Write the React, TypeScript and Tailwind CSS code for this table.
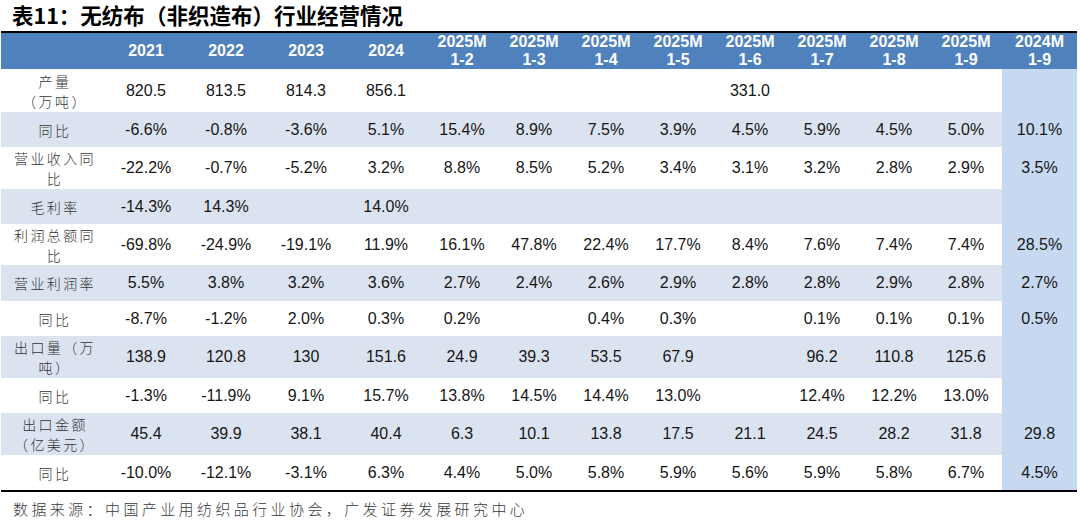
const cols = ['2021', '2022', '2023', '2024', '2025M 1-2', '2025M 1-3', '2025M 1-4', '2025M 1-5', '2025M 1-6', '2025M 1-7', '2025M 1-8', '2025M 1-9', '2024M 1-9'];

const rows = [
  { label: ['产量', '（万吨）'], h: 'h-[43px]', band: false, cells: ['820.5', '813.5', '814.3', '856.1', '', '', '', '', '331.0', '', '', '', ''] },
  { label: ['同比'], h: 'h-[35px]', band: true, cells: ['-6.6%', '-0.8%', '-3.6%', '5.1%', '15.4%', '8.9%', '7.5%', '3.9%', '4.5%', '5.9%', '4.5%', '5.0%', '10.1%'] },
  { label: ['营业收入同', '比'], h: 'h-[42px]', band: false, cells: ['-22.2%', '-0.7%', '-5.2%', '3.2%', '8.8%', '8.5%', '5.2%', '3.4%', '3.1%', '3.2%', '2.8%', '2.9%', '3.5%'] },
  { label: ['毛利率'], h: 'h-[35px]', band: true, cells: ['-14.3%', '14.3%', '', '14.0%', '', '', '', '', '', '', '', '', ''] },
  { label: ['利润总额同', '比'], h: 'h-[41px]', band: false, cells: ['-69.8%', '-24.9%', '-19.1%', '11.9%', '16.1%', '47.8%', '22.4%', '17.7%', '8.4%', '7.6%', '7.4%', '7.4%', '28.5%'] },
  { label: ['营业利润率'], h: 'h-[36px]', band: true, cells: ['5.5%', '3.8%', '3.2%', '3.6%', '2.7%', '2.4%', '2.6%', '2.9%', '2.8%', '2.8%', '2.9%', '2.8%', '2.7%'] },
  { label: ['同比'], h: 'h-[35px]', band: false, cells: ['-8.7%', '-1.2%', '2.0%', '0.3%', '0.2%', '', '0.4%', '0.3%', '', '0.1%', '0.1%', '0.1%', '0.5%'] },
  { label: ['出口量（万', '吨）'], h: 'h-[42px]', band: true, cells: ['138.9', '120.8', '130', '151.6', '24.9', '39.3', '53.5', '67.9', '', '96.2', '110.8', '125.6', ''] },
  { label: ['同比'], h: 'h-[35px]', band: false, cells: ['-1.3%', '-11.9%', '9.1%', '15.7%', '13.8%', '14.5%', '14.4%', '13.0%', '', '12.4%', '12.2%', '13.0%', ''] },
  { label: ['出口金额', '（亿美元）'], h: 'h-[42px]', band: true, cells: ['45.4', '39.9', '38.1', '40.4', '6.3', '10.1', '13.8', '17.5', '21.1', '24.5', '28.2', '31.8', '29.8'] },
  { label: ['同比'], h: 'h-[35px]', band: false, cells: ['-10.0%', '-12.1%', '-3.1%', '6.3%', '4.4%', '5.0%', '5.8%', '5.9%', '5.6%', '5.9%', '5.8%', '6.7%', '4.5%'] },
];

const grid = 'grid grid-cols-[105px_repeat(4,80px)_repeat(8,72px)_75px]';

// centred full-width brackets, as in the source table
function Cjk({ text }: { text: string }) {
  return (
    <>
      {text.split(/([（）])/).map((part, k) =>
        part === '（' || part === '）' ? (
          <span key={k} className="font-['Noto_Sans_CJK_TC','Noto_Sans_CJK_SC',sans-serif]">
            {part}
          </span>
        ) : (
          part
        )
      )}
    </>
  );
}

export default function App() {
  return (
    <div className="w-[1080px] h-[526px] bg-white overflow-hidden font-['Liberation_Sans',Arial,sans-serif]">
      <div className="h-[31px] pl-[12px] pt-[1px] text-[21.5px] leading-[28px] font-bold text-black whitespace-nowrap font-['Noto_Sans_CJK_SC','Noto_Sans',sans-serif]">
        <Cjk text="表11：无纺布（非织造布）行业经营情况" />
      </div>

      <div className="ml-[1px] w-[1076px] border-t-2 border-b-2 border-black">
        <div className={`${grid} h-[36px] bg-[#4f81bd] text-white font-bold text-[16px] leading-[18px]`}>
          <div />
          {cols.map((c) => {
            const [a, b] = c.split(' ');
            return (
              <div key={c} className="flex flex-col items-center justify-center text-center">
                <span>{a}</span>
                {b && <span>{b}</span>}
              </div>
            );
          })}
        </div>

        {rows.map((r, i) => (
          <div key={i} className={`${grid} ${r.h} ${r.band ? 'bg-[#dce3f0]' : 'bg-white'}`}>
            <div className="flex flex-col items-center justify-center pl-[3px] text-center text-[14px] leading-[20px] tracking-[2.4px] text-[#333] font-light whitespace-nowrap font-['Noto_Sans_CJK_SC','Noto_Sans',sans-serif]">
              {r.label.map((l) => (
                <span key={l}>
                  <Cjk text={l} />
                </span>
              ))}
            </div>
            {r.cells.map((v, j) => (
              <div
                key={j}
                className={`flex items-center justify-center text-[16px] text-[#161616] ${j === 12 ? 'bg-[#c6d9f0]' : ''}`}
              >
                {v}
              </div>
            ))}
          </div>
        ))}
      </div>

      <div className="pl-[13px] pt-[7px] text-[15px] leading-[20px] tracking-[3.4px] text-[#3a3a3a] font-light whitespace-nowrap font-['Noto_Sans_CJK_SC','Noto_Sans',sans-serif]">
        数据来源：中国产业用纺织品行业协会，广发证券发展研究中心
      </div>
    </div>
  );
}
